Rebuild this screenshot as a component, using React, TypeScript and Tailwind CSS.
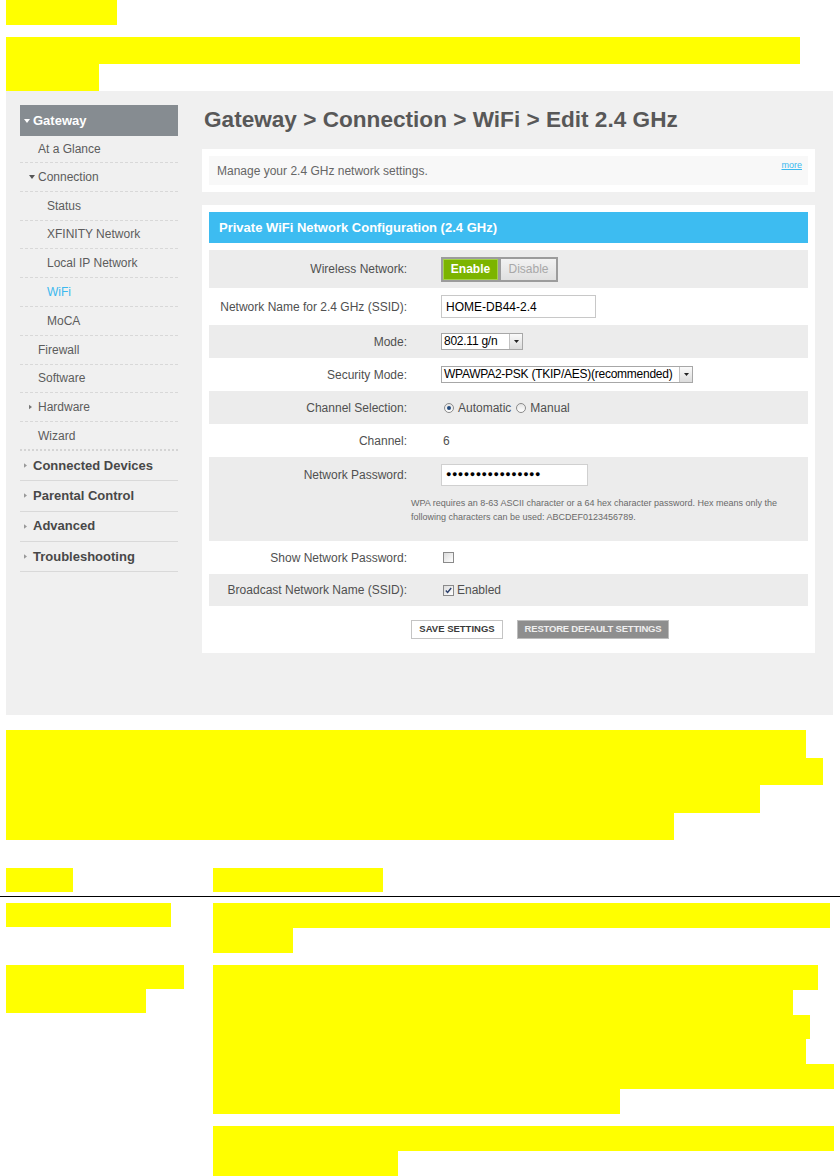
const Y = "bg-[#ffff00]";

function Bar({ w, h }: { w: number; h: number }) {
  return <div className={Y} style={{ width: w, height: h }} />;
}

function Down({ color = "#555" }: { color?: string }) {
  return (
    <svg width="6" height="4" viewBox="0 0 6 4" className="shrink-0">
      <path d="M0 0h6L3 4z" fill={color} />
    </svg>
  );
}

function Right({ color = "#777", w = 4, h = 6 }: { color?: string; w?: number; h?: number }) {
  return (
    <svg width={w} height={h} viewBox="0 0 4 6" className="shrink-0">
      <path d="M0 0l4 3-4 3z" fill={color} />
    </svg>
  );
}

const subItems: { label: string; indent: number; arrow?: "down" | "right"; active?: boolean }[] = [
  { label: "At a Glance", indent: 18 },
  { label: "Connection", indent: 9, arrow: "down" },
  { label: "Status", indent: 27 },
  { label: "XFINITY Network", indent: 27 },
  { label: "Local IP Network", indent: 27 },
  { label: "WiFi", indent: 27, active: true },
  { label: "MoCA", indent: 27 },
  { label: "Firewall", indent: 18 },
  { label: "Software", indent: 18 },
  { label: "Hardware", indent: 9, arrow: "right" },
  { label: "Wizard", indent: 18 },
];

const topItems = ["Connected Devices", "Parental Control", "Advanced", "Troubleshooting"];

function Sidebar() {
  return (
    <div className="w-[158px] shrink-0">
      <div className="h-[31px] bg-[#868c91] flex items-center pl-[4px] gap-[3px] text-white font-bold text-[13px]">
        <Down color="#fff" />
        <span>Gateway</span>
      </div>
      {subItems.map((it, i) => (
        <div
          key={it.label}
          className={`flex items-center text-[12px] ${i === 0 ? "h-[27px]" : "h-[28.8px]"} ${
            i === subItems.length - 1 ? "border-b-2 border-dotted border-[#d4d4d4]" : "border-b border-dashed border-[#d8d8d8]"
          } ${it.active ? "text-[#3cb9ef]" : "text-[#5c5c5c]"}`}
          style={{ paddingLeft: it.indent }}
        >
          {it.arrow === "down" && (
            <span className="w-[9px] flex items-center">
              <Down color="#555" />
            </span>
          )}
          {it.arrow === "right" && (
            <span className="w-[9px] flex items-center">
              <Right color="#777" w={3} h={6} />
            </span>
          )}
          <span>{it.label}</span>
        </div>
      ))}
      {topItems.map((t) => (
        <div key={t} className="h-[30.3px] flex items-center pl-[4px] border-b border-[#d9d9d9] text-[13px] font-bold text-[#484848]">
          <span className="w-[9px] flex items-center">
            <Right color="#999" w={3} h={5} />
          </span>
          <span>{t}</span>
        </div>
      ))}
    </div>
  );
}

function Row({ label, grey, h, children }: { label: string; grey?: boolean; h: number; children?: React.ReactNode }) {
  return (
    <div className={`flex items-center ${grey ? "bg-[#ececec]" : "bg-white"}`} style={{ height: h }}>
      <div className="w-[198px] text-right text-[12px] text-[#505050]">{label}</div>
      <div className="ml-[34px] flex items-center text-[12px] text-[#505050]">{children}</div>
    </div>
  );
}

function Select({ value, w }: { value: string; w: number }) {
  return (
    <div className="h-[17px] border border-[#a7a7a7] bg-white flex items-stretch" style={{ width: w }}>
      <div className="flex-1 pl-[2px] text-[12px] tracking-[-0.25px] text-black leading-[15px] whitespace-nowrap overflow-hidden">
        {value}
      </div>
      <div className="w-[13px] border-l border-[#c2c2c2] bg-gradient-to-b from-[#fafafa] to-[#dcdcdc] flex items-center justify-center">
        <svg width="5" height="3" viewBox="0 0 5 3">
          <path d="M0 0h5L2.5 3z" fill="#222" />
        </svg>
      </div>
    </div>
  );
}

function Radio({ on }: { on?: boolean }) {
  return (
    <span className="w-[10px] h-[10px] rounded-full border border-[#8a8a8a] bg-gradient-to-b from-[#e4e4e4] to-white flex items-center justify-center">
      {on && <span className="w-[4px] h-[4px] rounded-full bg-[#234a7c]" />}
    </span>
  );
}

function Check({ on }: { on?: boolean }) {
  return (
    <span className="w-[11px] h-[11px] border border-[#8a8a8a] bg-gradient-to-br from-[#dcdcdc] to-white flex items-center justify-center">
      {on && (
        <svg width="7" height="7" viewBox="0 0 7 7">
          <path d="M0.8 3.6l1.8 1.9L6.2 1" stroke="#2b3f6c" strokeWidth="1.4" fill="none" />
        </svg>
      )}
    </span>
  );
}

function Main() {
  return (
    <div className="ml-[24px] w-[613px]">
      <h1 className="mt-[2px] ml-[2px] text-[22.6px] leading-[26px] font-bold text-[#585858] whitespace-nowrap">
        Gateway &gt; Connection &gt; WiFi &gt; Edit 2.4 GHz
      </h1>
      <div className="mt-[16px] h-[43px] bg-white p-[7px]">
        <div className="relative h-[29px] bg-[#f8f8f8] flex items-center pl-[8px] text-[12px] text-[#666]">
          Manage your 2.4 GHz network settings.
          <span className="absolute right-[6px] top-[3px] text-[9px] text-[#3cb9ef] underline">more</span>
        </div>
      </div>
      <div className="mt-[13px] bg-white p-[7px]">
        <div className="h-[31px] bg-[#3dbcf1] flex items-center pl-[10px] text-white font-bold text-[13px]">
          Private WiFi Network Configuration (2.4 GHz)
        </div>
        <div className="mt-[7px]">
          <Row label="Wireless Network:" grey h={38}>
            <div className="flex h-[25px] bg-[#9c9c9c] p-[2px] gap-[3px]">
              <div className="w-[55px] bg-[#7cb400] border border-[#a4d34a] flex items-center justify-center text-white font-bold text-[12px]">
                Enable
              </div>
              <div className="w-[55px] bg-gradient-to-b from-[#f2f2f2] to-[#e0e0e0] flex items-center justify-center text-[#a8a8a8] text-[12px]">
                Disable
              </div>
            </div>
          </Row>
          <Row label="Network Name for 2.4 GHz (SSID):" h={37}>
            <div className="w-[155px] h-[23px] border border-[#c8c8c8] bg-white flex items-center pl-[4px] text-[12px] text-black">
              HOME-DB44-2.4
            </div>
          </Row>
          <Row label="Mode:" grey h={33}>
            <Select value="802.11 g/n" w={82} />
          </Row>
          <Row label="Security Mode:" h={33}>
            <Select value="WPAWPA2-PSK (TKIP/AES)(recommended)" w={252} />
          </Row>
          <Row label="Channel Selection:" grey h={33}>
            <div className="flex items-center ml-[3px]">
              <Radio on />
              <span className="ml-[4px]">Automatic</span>
              <span className="ml-[5px]">
                <Radio />
              </span>
              <span className="ml-[4px]">Manual</span>
            </div>
          </Row>
          <Row label="Channel:" h={33}>
            <span className="ml-[2px]">6</span>
          </Row>
          <div className="bg-[#ececec] h-[84px] pt-[7px]">
            <div className="flex items-center h-[22px]">
              <div className="w-[198px] text-right text-[12px] text-[#505050]">Network Password:</div>
              <div className="ml-[34px] w-[147px] h-[22px] border border-[#d0d0d0] bg-white flex items-center pl-[4px] text-[9px] tracking-[0.5px] text-black">
                ●●●●●●●●●●●●●●●●
              </div>
            </div>
            <div className="mt-[10px] pl-[202px] text-[9px] leading-[14px] text-[#6a6a6a]">
              <div className="whitespace-nowrap">
                WPA requires an 8-63 ASCII character or a 64 hex character password. Hex means only the
              </div>
              <div className="whitespace-nowrap">following characters can be used: ABCDEF0123456789.</div>
            </div>
          </div>
          <Row label="Show Network Password:" h={33}>
            <span className="ml-[2px]">
              <Check />
            </span>
          </Row>
          <Row label="Broadcast Network Name (SSID):" grey h={32}>
            <span className="ml-[2px]">
              <Check on />
            </span>
            <span className="ml-[3px]">Enabled</span>
          </Row>
          <div className="pt-[14px] pb-[7px] pl-[202px] flex gap-[14px]">
            <div className="w-[92px] h-[19px] border border-[#c4c4c4] bg-white flex items-center justify-center text-[9.5px] font-bold text-[#3a3a3a] whitespace-nowrap">
              SAVE SETTINGS
            </div>
            <div className="w-[152px] h-[19px] border border-[#bdbdbd] bg-[#8e8e8e] flex items-center justify-center text-[9.5px] tracking-[-0.2px] font-bold text-[#efefef] whitespace-nowrap">
              RESTORE DEFAULT SETTINGS
            </div>
          </div>
        </div>
      </div>
    </div>
  );
}

export default function App() {
  return (
    <div className="w-[840px] h-[1176px] overflow-hidden bg-white font-['Liberation_Sans',Arial,sans-serif]">
      <div className="pl-[6px]">
        <Bar w={111} h={25} />
        <div className="h-[12px]" />
        <Bar w={794} h={27} />
        <Bar w={93} h={27} />
      </div>

      <div className="ml-[6px] w-[827px] h-[624px] bg-[#f0f0f0] flex pt-[14px] pl-[14px]">
        <Sidebar />
        <Main />
      </div>

      <div className="mt-[15px] pl-[6px]">
        {[800, 817, 754, 668].map((w, i) => (
          <Bar key={i} w={w} h={27.5} />
        ))}
      </div>

      <div className="mt-[28px] flex pl-[6px]">
        <div className="w-[207px]">
          <Bar w={67} h={24} />
        </div>
        <Bar w={170} h={24} />
      </div>
      <div className="mt-[4px] border-t border-black" />

      <div className="mt-[6px] flex pl-[6px]">
        <div className="w-[207px]">
          <Bar w={165} h={24} />
        </div>
        <div>
          <Bar w={617} h={25} />
          <Bar w={80} h={25} />
        </div>
      </div>

      <div className="mt-[12px] flex pl-[6px]">
        <div className="w-[207px]">
          <Bar w={178} h={24} />
          <Bar w={140} h={24} />
        </div>
        <div>
          {[605, 580, 597, 593, 621, 407].map((w, i) => (
            <Bar key={i} w={w} h={24.8} />
          ))}
        </div>
      </div>

      <div className="mt-[12px] flex pl-[6px]">
        <div className="w-[207px]" />
        <div>
          <Bar w={621} h={25} />
          <Bar w={185} h={25} />
        </div>
      </div>
    </div>
  );
}
